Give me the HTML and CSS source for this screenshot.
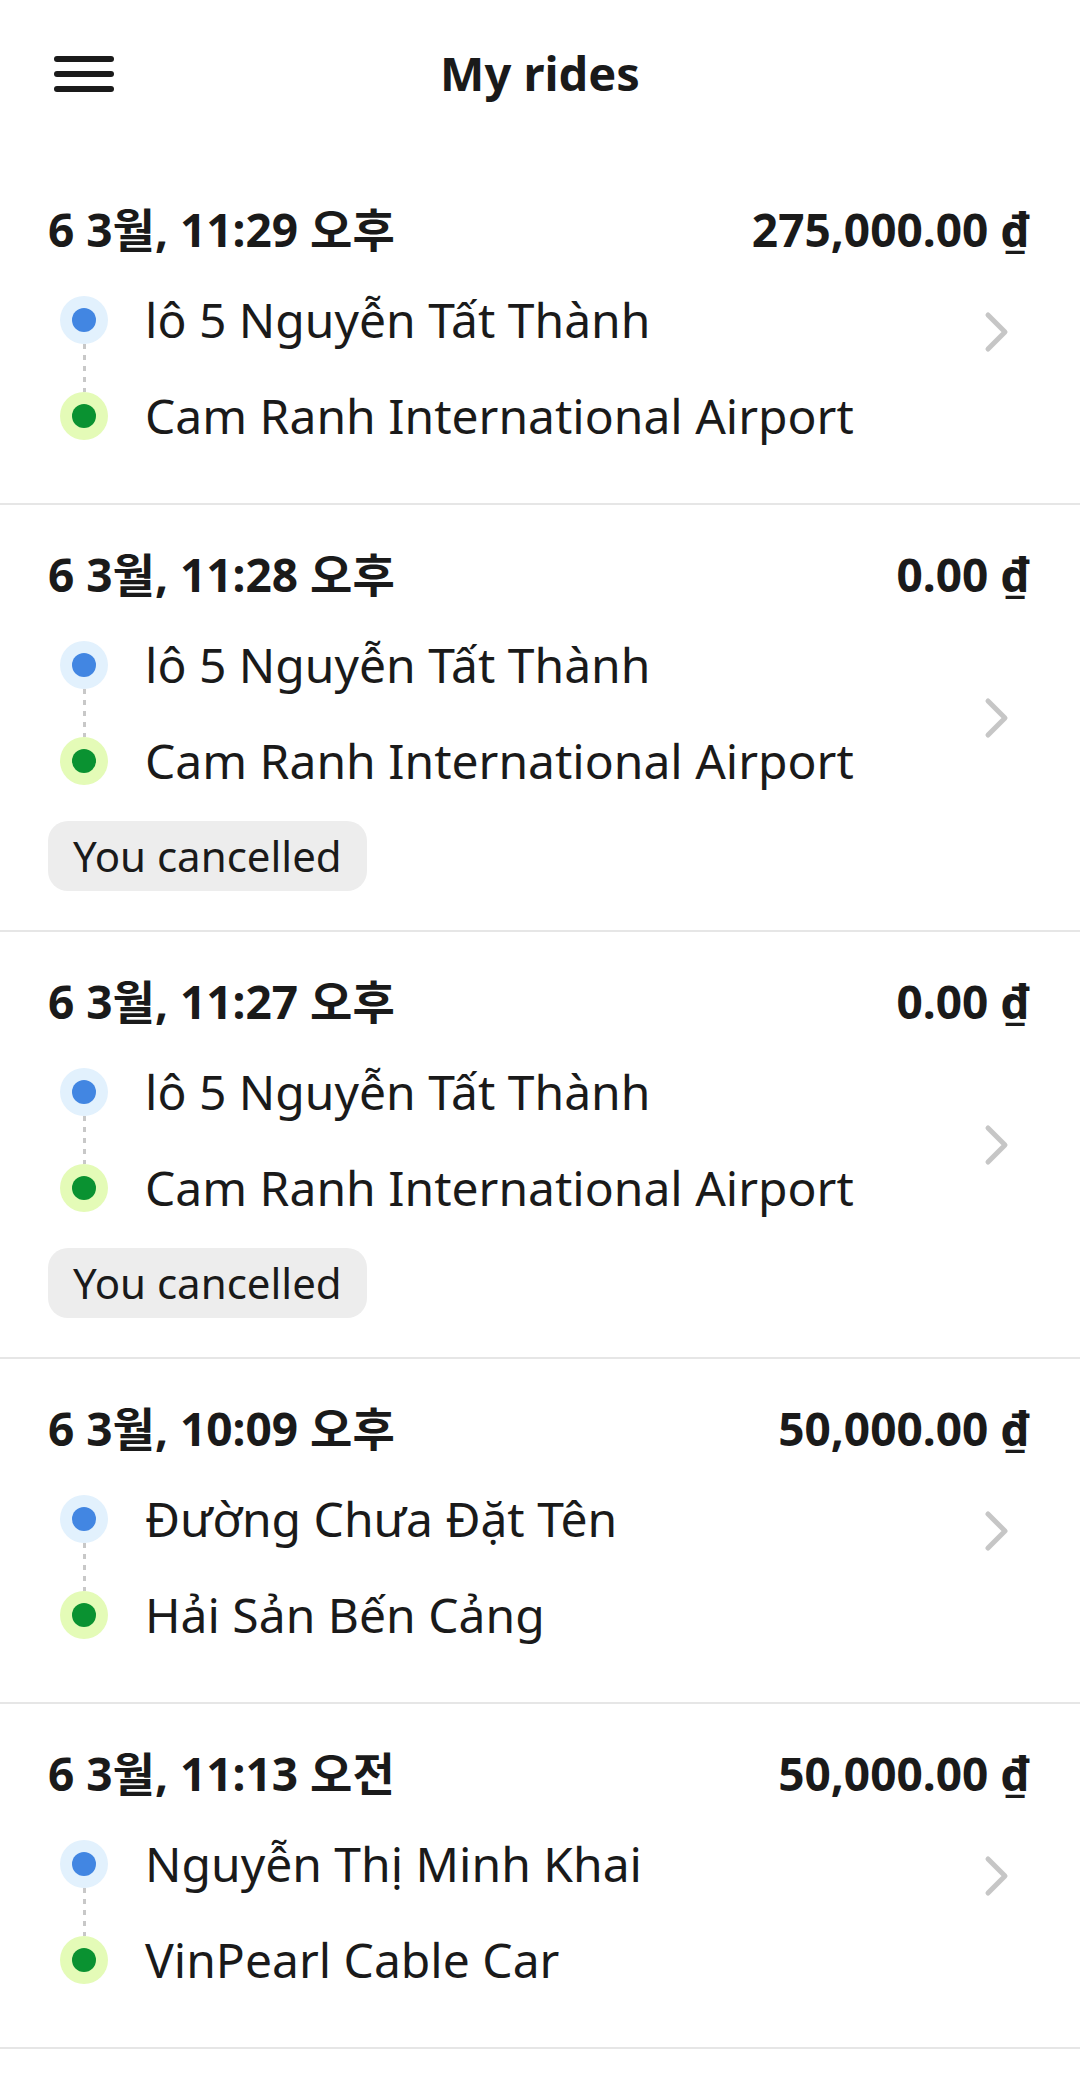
FILE: index.html
```html
<!DOCTYPE html>
<html>
<head>
  <meta charset="utf-8">
  <title>My rides</title>
  <link rel="stylesheet" href="styles.css">
</head>
<body>
  <header class="topbar">
    <button class="menu-btn" aria-label="Menu">
      <span></span><span></span><span></span>
    </button>
    <h1>My rides</h1>
  </header>

  <div class="rides">
    <div class="ride">
      <div class="ride-head">
        <span class="when">6 3월, 11:29 오후</span>
        <span class="price">275,000.00 ₫</span>
      </div>
      <div class="route">
        <div class="markers">
          <span class="dot from"></span>
          <span class="link"></span>
          <span class="dot to"></span>
        </div>
        <div class="stops">
          <div class="stop">lô 5 Nguyễn Tất Thành</div>
          <div class="stop">Cam Ranh International Airport</div>
        </div>
      </div>
      <svg class="chev" viewBox="0 0 26 42"><polyline points="4,4 21,21 4,38"/></svg>
    </div>

    <div class="ride cancelled">
      <div class="ride-head">
        <span class="when">6 3월, 11:28 오후</span>
        <span class="price">0.00 ₫</span>
      </div>
      <div class="route">
        <div class="markers">
          <span class="dot from"></span>
          <span class="link"></span>
          <span class="dot to"></span>
        </div>
        <div class="stops">
          <div class="stop">lô 5 Nguyễn Tất Thành</div>
          <div class="stop">Cam Ranh International Airport</div>
        </div>
      </div>
      <div class="status"><span>You cancelled</span></div>
      <svg class="chev" viewBox="0 0 26 42"><polyline points="4,4 21,21 4,38"/></svg>
    </div>

    <div class="ride cancelled">
      <div class="ride-head">
        <span class="when">6 3월, 11:27 오후</span>
        <span class="price">0.00 ₫</span>
      </div>
      <div class="route">
        <div class="markers">
          <span class="dot from"></span>
          <span class="link"></span>
          <span class="dot to"></span>
        </div>
        <div class="stops">
          <div class="stop">lô 5 Nguyễn Tất Thành</div>
          <div class="stop">Cam Ranh International Airport</div>
        </div>
      </div>
      <div class="status"><span>You cancelled</span></div>
      <svg class="chev" viewBox="0 0 26 42"><polyline points="4,4 21,21 4,38"/></svg>
    </div>

    <div class="ride">
      <div class="ride-head">
        <span class="when">6 3월, 10:09 오후</span>
        <span class="price">50,000.00 ₫</span>
      </div>
      <div class="route">
        <div class="markers">
          <span class="dot from"></span>
          <span class="link"></span>
          <span class="dot to"></span>
        </div>
        <div class="stops">
          <div class="stop">Đường Chưa Đặt Tên</div>
          <div class="stop">Hải Sản Bến Cảng</div>
        </div>
      </div>
      <svg class="chev" viewBox="0 0 26 42"><polyline points="4,4 21,21 4,38"/></svg>
    </div>

    <div class="ride">
      <div class="ride-head">
        <span class="when">6 3월, 11:13 오전</span>
        <span class="price">50,000.00 ₫</span>
      </div>
      <div class="route">
        <div class="markers">
          <span class="dot from"></span>
          <span class="link"></span>
          <span class="dot to"></span>
        </div>
        <div class="stops">
          <div class="stop">Nguyễn Thị Minh Khai</div>
          <div class="stop">VinPearl Cable Car</div>
        </div>
      </div>
      <svg class="chev" viewBox="0 0 26 42"><polyline points="4,4 21,21 4,38"/></svg>
    </div>
  </div>
</body>
</html>
```

FILE: styles.css
```css
body {
  margin: 0;
  padding: 0;
  font-family: 'Noto Sans', 'Noto Sans CJK KR', sans-serif;
  background: #ffffff;
  color: #1a1a1a;
}

.topbar {
  position: relative;
  height: 148px;
  display: flex;
  align-items: center;
  justify-content: center;
}

.topbar h1 {
  margin: 0;
  font-size: 47px;
  font-weight: 700;
  line-height: 60px;
  transform: translateY(-1px);
}

.menu-btn {
  position: absolute;
  left: 54px;
  top: 56px;
  width: 60px;
  padding: 0;
  border: none;
  background: none;
  display: flex;
  flex-direction: column;
  gap: 9px;
}

.menu-btn span {
  display: block;
  height: 6px;
  border-radius: 3px;
  background: #1a1a1a;
}

.rides {
  padding-top: 12px;
}

.ride {
  display: grid;
  grid-template-columns: 1fr auto;
  grid-template-rows: auto auto;
  padding: 39px 50px 39px 48px;
  border-bottom: 2px solid #e6e6e6;
}

.ride.cancelled {
  grid-template-rows: auto auto auto;
}

.ride-head {
  grid-column: 1 / -1;
  grid-row: 1;
  display: flex;
  justify-content: space-between;
  font-size: 46px;
  font-weight: 700;
  line-height: 60px;
}

.route {
  grid-column: 1;
  grid-row: 2;
  display: flex;
  margin-top: 13px;
}

.markers {
  display: flex;
  flex-direction: column;
  align-items: center;
  width: 48px;
  margin-left: 12px;
  padding: 24px 0;
}

.dot {
  width: 48px;
  height: 48px;
  border-radius: 50%;
  display: flex;
  align-items: center;
  justify-content: center;
}

.dot::after {
  content: "";
  width: 24px;
  height: 24px;
  border-radius: 50%;
}

.dot.from {
  background: #e2f1fd;
}

.dot.from::after {
  background: #4286e2;
}

.dot.to {
  background: #e4fbb7;
}

.dot.to::after {
  background: #0a9231;
}

.link {
  width: 3px;
  height: 48px;
  background: repeating-linear-gradient(to bottom, #c8c8c8 0 5px, transparent 5px 11px);
}

.stops {
  margin-left: 37px;
  font-size: 48px;
  line-height: 96px;
}

.stop {
  white-space: nowrap;
}

.status {
  grid-column: 1;
  grid-row: 3;
  margin-top: 12px;
}

.status span {
  display: inline-block;
  height: 70px;
  line-height: 70px;
  padding: 0 25px;
  border-radius: 20px;
  background: #ededed;
  font-size: 42px;
}

.chev {
  grid-column: 2;
  grid-row: 1 / -1;
  align-self: center;
  width: 26px;
  height: 42px;
  margin-right: 20px;
}

.chev polyline {
  fill: none;
  stroke: #c6c6c6;
  stroke-width: 5;
  stroke-linecap: round;
  stroke-linejoin: round;
}
```
